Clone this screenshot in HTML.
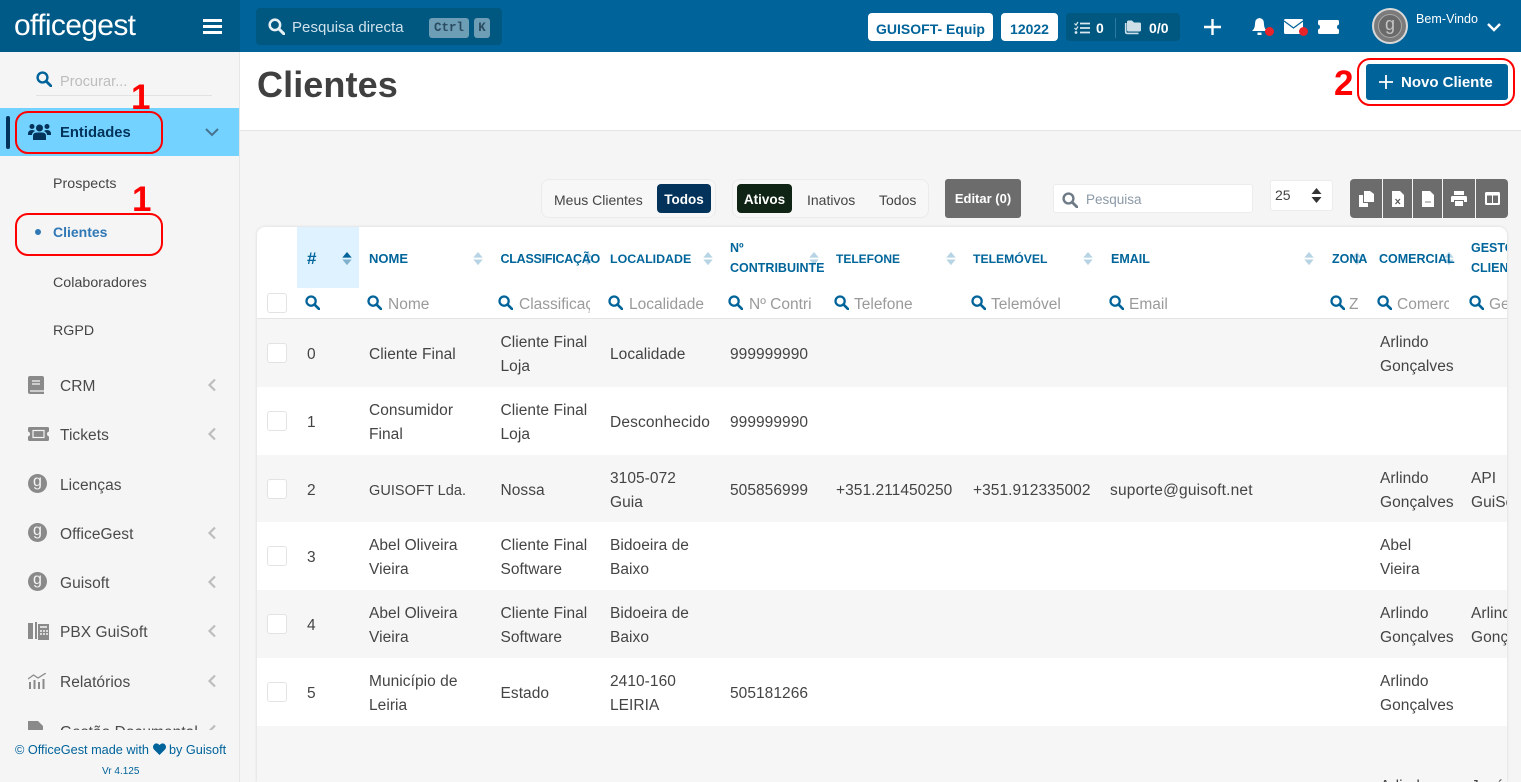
<!DOCTYPE html>
<html lang="pt"><head><meta charset="utf-8"><title>Clientes</title>
<style>
html,body{margin:0;padding:0;width:1521px;height:782px;overflow:hidden;background:#f5f5f5}
body{position:relative;font-family:"Liberation Sans",sans-serif;color:#444}
div,span,svg{position:absolute;box-sizing:border-box}
.t{white-space:nowrap;font-size:15.5px;letter-spacing:.05px;line-height:24px;height:24px;color:#444;margin-top:1px}
.m{font-size:15.5px;color:#4a4a4a;margin-top:2px}
.s{font-size:14.2px;color:#444}
.c .t{margin-top:2px}
.h{white-space:nowrap;font-weight:bold;font-size:12.5px;line-height:18px;color:#00659a;margin-top:1px}
.p{white-space:nowrap;font-size:15.5px;line-height:24px;color:#9a9a9a;overflow:hidden;height:24px;margin-top:2px}
.cb{width:20px;height:20px;left:10px;background:#fff;border:1px solid #e3e3e3;border-radius:3px}
.row{left:0;width:1250px;height:68px}
.g{background:#f6f6f6}
.gi{left:28px;width:19px;height:19px;border-radius:50%;background:#8a8a8a;color:#f5f5f5;font-size:16px;line-height:15px;text-align:center}
.w{background:#fff;border-radius:4px}
.dot{width:9px;height:9px;border-radius:50%;background:#e8242a;top:27px}
.red{border:2px solid #f00;border-radius:13px}
.n{font-weight:bold;color:#f00;white-space:nowrap}
</style></head><body>
<svg width="0" height="0" style="left:0;top:0"><defs>
<symbol id="q" viewBox="0 0 16 16"><circle cx="6.5" cy="6.5" r="4.9" fill="none" stroke="currentColor" stroke-width="2.4"/><path d="M10.2 10.2L15 15" stroke="currentColor" stroke-width="2.8" stroke-linecap="round"/></symbol>
<symbol id="ar" viewBox="0 0 12 16"><path d="M6 1L11 7H1Z" fill="#b7d4e4"/><path d="M6 15L11 9H1Z" fill="#b7d4e4"/></symbol>
<symbol id="cl" viewBox="0 0 10 14"><path d="M8 1.5L2.5 7L8 12.5" fill="none" stroke="#bdbdbd" stroke-width="2.2"/></symbol>
</defs></svg>

<!-- top bar -->
<div style="left:0;top:0;width:1521px;height:52px;background:#00639a"></div>
<div style="left:0;top:0;width:240px;height:52px;background:#005a88"></div>
<div class="t" style="left:14px;top:8px;height:34px;line-height:34px;font-size:30px;letter-spacing:-.65px;color:#fff">officegest</div>
<div style="left:203px;top:19px;width:19px;height:3px;background:#fff"></div>
<div style="left:203px;top:25px;width:19px;height:3px;background:#fff"></div>
<div style="left:203px;top:31px;width:19px;height:3px;background:#fff"></div>

<div style="left:256px;top:8px;width:246px;height:37px;background:#00577f;border-radius:4px"></div>
<svg style="left:268px;top:18px;color:#e6f0f5" width="17" height="17"><use href="#q"/></svg>
<div class="t" style="left:292px;top:15px;color:#cfe2ec;font-size:15px">Pesquisa directa</div>
<div style="left:429px;top:18px;width:40px;height:20px;background:#6e9db6;border-radius:3px;font:bold 12.5px/20px 'Liberation Mono',monospace;color:#2a4c60;text-align:center">Ctrl</div>
<div style="left:474px;top:18px;width:16px;height:20px;background:#6e9db6;border-radius:3px;font:bold 12.5px/20px 'Liberation Mono',monospace;color:#2a4c60;text-align:center">K</div>

<div class="w" style="left:868px;top:13px;width:125px;height:28px;color:#00639a;font-weight:bold;font-size:14px;line-height:32px;text-align:center;white-space:nowrap">GUISOFT- Equip</div>
<div class="w" style="left:1001px;top:13px;width:57px;height:28px;color:#00639a;font-weight:bold;font-size:14px;line-height:32px;text-align:center">12022</div>
<div style="left:1066px;top:13px;width:114px;height:28px;background:#00577f;border-radius:4px"></div>
<svg style="left:1074px;top:21px" width="16" height="14" viewBox="0 0 16 14"><path d="M6 2.5H16M6 7H16M6 11.5H16" stroke="#dbe8ef" stroke-width="1.8"/><path d="M.5 2.5L2 4L4 1M.5 7L2 8.5L4 5.5" fill="none" stroke="#dbe8ef" stroke-width="1.2"/><circle cx="2" cy="11.5" r="1.4" fill="#dbe8ef"/></svg>
<div class="t" style="left:1096px;top:15px;color:#fff;font-weight:bold;font-size:14px">0</div>
<div style="left:1115px;top:18px;width:1px;height:20px;background:#2a7aa5"></div>
<svg style="left:1124px;top:20px" width="17" height="15" viewBox="0 0 17 15"><path d="M3 2Q3 .5 4.500 .5H8L10 2.500H15.500Q17 2.500 17 4V10Q17 11.500 15.500 11.500H4.500Q3 11.500 3 10Z" fill="#cfdfe8"/><path d="M1.700 3V12Q1.700 13.400 3.200 13.400H14.500" fill="none" stroke="#cfdfe8" stroke-width="1.600"/></svg>
<div class="t" style="left:1149px;top:15px;color:#fff;font-weight:bold;font-size:14px">0/0</div>
<svg style="left:1204px;top:19px" width="17" height="16"><path d="M8.5 0V16M0 8H17" stroke="#fff" stroke-width="2.4"/></svg>
<svg style="left:1252px;top:17px" width="15" height="19" viewBox="0 0 15 19"><path d="M7.5 1Q12 1.500 12 7Q12 11.500 15 14H0Q3 11.500 3 7Q3 1.500 7.500 1Z" fill="#fff"/><path d="M5.500 15.500H9.500V18H5.500Z" fill="#fff"/></svg>
<div class="dot" style="left:1265px"></div>
<svg style="left:1284px;top:19px" width="19" height="15" viewBox="0 0 19 15"><rect width="19" height="15" rx="1.500" fill="#fff"/><path d="M0 2L9.500 9L19 2" fill="none" stroke="#00639a" stroke-width="1.300"/></svg>
<div class="dot" style="left:1299px"></div>
<svg style="left:1318px;top:20px" width="21" height="14" viewBox="0 0 21 14"><path d="M1.500 0H19.500Q21 0 21 1.500V4.500Q19 5 19 7Q19 9 21 9.500V12.500Q21 14 19.500 14H1.500Q0 14 0 12.500V9.500Q2 9 2 7Q2 5 0 4.500V1.500Q0 0 1.500 0Z" fill="#fff"/></svg>
<div style="left:1372px;top:8px;width:36px;height:36px;border-radius:50%;background:#7b7b7b;border:2px solid #d8d8d8"></div>
<div style="left:1378px;top:14px;width:24px;height:24px;border-radius:50%;background:#6a6a6a;border:1px solid #a8a8a8;color:#c4c4c4;font-size:18px;line-height:19px;text-align:center">g</div>
<div class="t" style="left:1416px;top:6px;color:#fff;font-size:12.5px">Bem-Vindo</div>
<svg style="left:1487px;top:23px" width="14" height="9"><path d="M1 1L7 7L13 1" fill="none" stroke="#fff" stroke-width="2.400"/></svg>

<!-- sidebar -->
<div style="left:0;top:52px;width:240px;height:730px;background:#f5f5f5;border-right:1px solid #e6e6e6"></div>
<svg style="left:36px;top:71px;color:#00639a" width="16" height="16"><use href="#q"/></svg>
<div class="t" style="left:60px;top:69px;color:#bdbdbd;font-size:14.5px">Procurar...</div>
<div style="left:36px;top:95px;width:176px;height:1px;background:#e2e2e2"></div>

<div style="left:0;top:108px;width:239px;height:48px;background:#73d2ff"></div>
<div style="left:6px;top:116px;width:4px;height:33px;background:#03335a;border-radius:2px"></div>
<svg style="left:28px;top:123px" width="23" height="18" viewBox="0 0 23 18" fill="#03335a"><circle cx="11.500" cy="5" r="3.500"/><circle cx="4" cy="3.500" r="2.500"/><circle cx="19" cy="3.500" r="2.500"/><path d="M5 17V13Q5 9.500 9 9.500H14Q18 9.500 18 13V17Z"/><path d="M0 11Q0 7 4 7Q6 7 7 8Q4 9.500 4 12H0Z"/><path d="M23 11Q23 7 19 7Q17 7 16 8Q19 9.500 19 12H23Z"/></svg>
<div class="t" style="left:60px;top:120px;color:#03335a;font-weight:bold;font-size:14.800px;letter-spacing:0">Entidades</div>
<svg style="left:205px;top:128px" width="14" height="9"><path d="M1 1L7 7L13 1" fill="none" stroke="#48728f" stroke-width="2"/></svg>

<div class="t s" style="left:53px;top:171px">Prospects</div>
<div style="left:35px;top:229px;width:6px;height:6px;border-radius:50%;background:#2f78b5"></div>
<div class="t s" style="left:53px;top:219px;color:#2f78b5;font-weight:bold;font-size:14px;letter-spacing:0">Clientes</div>
<div class="t s" style="left:53px;top:270px">Colaboradores</div>
<div class="t s" style="left:53px;top:318px">RGPD</div>

<svg style="left:28px;top:376px" width="16" height="18" viewBox="0 0 16 18"><path d="M2 0H14Q16 0 16 2V18H2Q0 18 0 16V2Q0 0 2 0Z" fill="#8a8a8a"/><path d="M4 5H12M4 8H12M2 15H16" stroke="#f5f5f5" stroke-width="1.300"/></svg>
<div class="t m" style="left:60px;top:373px">CRM</div>
<svg style="left:207px;top:378px" width="10" height="14"><use href="#cl"/></svg>
<svg style="left:28px;top:427px" width="21" height="14" viewBox="0 0 21 14"><path d="M1.500 0H19.500Q21 0 21 1.500V4.500Q19 5 19 7Q19 9 21 9.500V12.500Q21 14 19.500 14H1.500Q0 14 0 12.500V9.500Q2 9 2 7Q2 5 0 4.500V1.500Q0 0 1.500 0Z" fill="#8a8a8a"/><rect x="5" y="3.500" width="11" height="7" fill="none" stroke="#f5f5f5" stroke-width="1.200"/></svg>
<div class="t m" style="left:60px;top:422px">Tickets</div>
<svg style="left:207px;top:427px" width="10" height="14"><use href="#cl"/></svg>
<div class="gi" style="top:474px">g</div>
<div class="t m" style="left:60px;top:472px">Licenças</div>
<div class="gi" style="top:523px">g</div>
<div class="t m" style="left:60px;top:521px">OfficeGest</div>
<svg style="left:207px;top:526px" width="10" height="14"><use href="#cl"/></svg>
<div class="gi" style="top:572px">g</div>
<div class="t m" style="left:60px;top:570px">Guisoft</div>
<svg style="left:207px;top:575px" width="10" height="14"><use href="#cl"/></svg>
<svg style="left:28px;top:622px" width="21" height="18" viewBox="0 0 21 18"><path d="M0 1H5V17H0ZM7 0H9V17H7Z" fill="#8a8a8a"/><rect x="10" y="2" width="11" height="16" fill="#8a8a8a"/><path d="M12 5H19M12 9H14M15 9H17M18 9H20M12 12H14M15 12H17M18 12H20" stroke="#f5f5f5" stroke-width="1.400"/></svg>
<div class="t m" style="left:60px;top:619px">PBX GuiSoft</div>
<svg style="left:207px;top:624px" width="10" height="14"><use href="#cl"/></svg>
<svg style="left:28px;top:673px" width="18" height="16" viewBox="0 0 18 16"><path d="M1 9H3V16H1ZM5.500 7H7.500V16H5.500ZM10 9H12V16H10ZM14.500 6H16.500V16H14.500Z" fill="#8a8a8a"/><path d="M0 6L5.500 2L10 5L18 0" fill="none" stroke="#8a8a8a" stroke-width="1.300"/></svg>
<div class="t m" style="left:60px;top:669px">Relatórios</div>
<svg style="left:207px;top:674px" width="10" height="14"><use href="#cl"/></svg>
<div style="left:0;top:715px;width:239px;height:15px;overflow:hidden">
<svg style="left:28px;top:6px" width="15" height="18" viewBox="0 0 15 18"><path d="M0 0H10L15 5V18H0Z" fill="#8a8a8a"/></svg>
<div class="t m" style="left:60px;top:4px">Gestão Documental</div>
<svg style="left:207px;top:9px" width="10" height="14"><use href="#cl"/></svg>
</div>
<div class="t" style="left:15px;top:737px;font-size:12.7px;letter-spacing:0;color:#00639a">© OfficeGest made with</div>
<svg style="left:153px;top:743px" width="13" height="12" viewBox="0 0 13 12"><path d="M6.500 12L1 6.500Q-1 4 1 1.500Q3.500 -1 6.500 2Q9.500 -1 12 1.500Q14 4 12 6.500Z" fill="#00639a"/></svg>
<div class="t" style="left:169px;top:737px;font-size:12.7px;letter-spacing:0;color:#00639a">by Guisoft</div>
<div class="t" style="left:102px;top:759px;font-size:10px;letter-spacing:0;color:#00639a">Vr 4.125</div>

<div class="red" style="left:15px;top:111px;width:148px;height:43px"></div>
<div class="red" style="left:15px;top:213px;width:148px;height:43px"></div>
<div class="n" style="left:131px;top:80px;font-size:35px;line-height:36px">1</div>
<div class="n" style="left:132px;top:182px;font-size:35px;line-height:36px">1</div>

<!-- page header -->
<div style="left:240px;top:52px;width:1281px;height:79px;background:#fff;border-bottom:1px solid #e4e4e4"></div>
<div class="t" style="left:257px;top:63px;height:42px;line-height:42px;font-size:36px;font-weight:bold;letter-spacing:.1px;color:#404040">Clientes</div>
<div class="n" style="left:1334px;top:65px;font-size:35px;line-height:38px">2</div>
<div class="red" style="left:1357px;top:58px;width:158px;height:48px"></div>
<div style="left:1366px;top:64px;width:142px;height:36px;background:#00639a;border-radius:3px"></div>
<svg style="left:1379px;top:75px" width="14" height="14"><path d="M7 0V14M0 7H14" stroke="#fff" stroke-width="1.800"/></svg>
<div class="t" style="left:1401px;top:70px;color:#fff;font-weight:bold;font-size:15px;letter-spacing:0">Novo Cliente</div>

<!-- toolbar -->
<div style="left:541px;top:179px;width:175px;height:39px;background:#f7f7f7;border:1px solid #ebebeb;border-radius:8px"></div>
<div class="t" style="left:554px;top:187px;font-size:14px;letter-spacing:0;color:#444">Meus Clientes</div>
<div style="left:657px;top:184px;width:54px;height:29px;background:#03335a;border-radius:4px;color:#fff;font-weight:bold;font-size:13.500px;line-height:31px;text-align:center">Todos</div>
<div style="left:732px;top:179px;width:197px;height:39px;background:#f7f7f7;border:1px solid #ebebeb;border-radius:8px"></div>
<div style="left:737px;top:184px;width:55px;height:29px;background:#0f2414;border-radius:4px;color:#fff;font-weight:bold;font-size:13.500px;line-height:31px;text-align:center">Ativos</div>
<div class="t" style="left:807px;top:187px;font-size:14px;letter-spacing:0">Inativos</div>
<div class="t" style="left:879px;top:187px;font-size:14px;letter-spacing:0">Todos</div>
<div style="left:945px;top:179px;width:76px;height:39px;background:#6c6c6c;border-radius:3px;color:#fff;font-weight:bold;font-size:13px;line-height:40px;text-align:center;white-space:nowrap">Editar (0)</div>
<div style="left:1053px;top:184px;width:200px;height:29px;background:#fff;border:1px solid #ececec;border-radius:3px"></div>
<svg style="left:1062px;top:192px;color:#6e7b86" width="16" height="16"><use href="#q"/></svg>
<div class="t" style="left:1086px;top:187px;color:#8b99a6;font-size:13.500px;letter-spacing:0">Pesquisa</div>
<div style="left:1270px;top:180px;width:63px;height:31px;background:#fff;border:1px solid #ececec;border-radius:3px"></div>
<div class="t" style="left:1275px;top:182px;font-size:14px;letter-spacing:0">25</div>
<svg style="left:1311px;top:188px" width="11" height="15" viewBox="0 0 11 15"><path d="M5.500 0L10.500 6H.5ZM5.500 15L10.500 9H.5Z" fill="#333"/></svg>

<div style="left:1350px;top:179px;width:158px;height:39px;background:#6c6c6c;border-radius:4px"></div>
<div style="left:1382px;top:179px;width:1px;height:39px;background:#f5f5f5"></div>
<div style="left:1412px;top:179px;width:1px;height:39px;background:#f5f5f5"></div>
<div style="left:1442px;top:179px;width:1px;height:39px;background:#f5f5f5"></div>
<div style="left:1475px;top:179px;width:1px;height:39px;background:#f5f5f5"></div>
<svg style="left:1359px;top:191px" width="15" height="16" viewBox="0 0 15 16" fill="#fff"><path d="M5 0H11L15 3V11H5Z"/><path d="M0 4H4V12H9V16H0Z"/></svg>
<svg style="left:1392px;top:191px" width="12" height="16" viewBox="0 0 12 16"><path d="M0 0H8L12 4V16H0Z" fill="#fff"/><path d="M3.500 8L8 13M8 8L3.500 13" stroke="#555" stroke-width="1.200"/></svg>
<svg style="left:1422px;top:191px" width="12" height="16" viewBox="0 0 12 16"><path d="M0 0H8L12 4V16H0Z" fill="#fff"/><path d="M3 11H9" stroke="#aaa" stroke-width="1.500"/></svg>
<svg style="left:1451px;top:191px" width="16" height="15" viewBox="0 0 16 15" fill="#fff"><path d="M3 0H13V4H3ZM1.500 5H14.500Q16 5 16 6.500V11H13V9H3V11H0V6.500Q0 5 1.500 5ZM4 10H12V15H4Z"/></svg>
<svg style="left:1485px;top:192px" width="15" height="13" viewBox="0 0 15 13" fill="#fff"><path d="M1.500 0H13.500Q15 0 15 1.500V11.500Q15 13 13.500 13H1.500Q0 13 0 11.500V1.500Q0 0 1.500 0Z"/><path d="M2 3.500H7V11H2ZM8 3.500H13V11H8Z" fill="#6c6c6c"/></svg>

<!-- table card -->
<div class="c" style="left:257px;top:227px;width:1250px;height:555px;background:#fff;border-radius:8px 8px 0 0;box-shadow:0 0 3px rgba(0,0,0,.13);overflow:hidden">
<div style="left:40px;top:0;width:62px;height:61px;background:#dff2ff"></div>
<div class="row g" style="top:92px"></div>
<div class="row g" style="top:228px;height:67px"></div>
<div class="row g" style="top:363px"></div>
<div class="row g" style="top:499px;height:56px"></div>
<div style="left:0;top:91px;width:1250px;height:1px;background:#e4e4e4"></div>

<svg style="left:84px;top:24px" width="12" height="15" viewBox="0 0 12 16"><path d="M6 1L11 7H1Z" fill="#00639a"/><path d="M6 15L11 9H1Z" fill="#7fb0cc"/></svg>
<svg style="left:215px;top:24px" width="12" height="15"><use href="#ar"/></svg>
<svg style="left:325px;top:24px" width="12" height="15"><use href="#ar"/></svg>
<svg style="left:445px;top:24px" width="12" height="15"><use href="#ar"/></svg>
<svg style="left:551px;top:24px" width="12" height="15"><use href="#ar"/></svg>
<svg style="left:688px;top:24px" width="12" height="15"><use href="#ar"/></svg>
<svg style="left:825px;top:24px" width="12" height="15"><use href="#ar"/></svg>
<svg style="left:1046px;top:24px" width="12" height="15"><use href="#ar"/></svg>
<svg style="left:1094px;top:24px" width="12" height="15"><use href="#ar"/></svg>
<svg style="left:1186px;top:24px" width="12" height="15"><use href="#ar"/></svg>

<div class="h" style="left:50px;top:20px;font-size:17px;line-height:22px">#</div>
<div class="h" style="left:112px;top:22px;font-size:13px">NOME</div>
<div class="h" style="left:243.500px;top:22px;letter-spacing:-.25px">CLASSIFICAÇÃO</div>
<div class="h" style="left:353px;top:22px;font-size:12.4px">LOCALIDADE</div>
<div class="h" style="left:473px;top:10px;line-height:20px">Nº<br>CONTRIBUINTE</div>
<div class="h" style="left:579px;top:22px;font-size:12px">TELEFONE</div>
<div class="h" style="left:716px;top:22px;font-size:12.2px">TELEMÓVEL</div>
<div class="h" style="left:854px;top:22px">EMAIL</div>
<div class="h" style="left:1075px;top:22px">ZONA</div>
<div class="h" style="left:1122px;top:22px">COMERCIAL</div>
<div class="h" style="left:1214px;top:10px;line-height:20px">GESTOR<br>CLIENTE</div>

<div class="cb" style="top:66px"></div>
<svg style="left:48px;top:68px;color:#00639a" width="15" height="15"><use href="#q"/></svg>
<svg style="left:110px;top:68px;color:#00639a" width="15" height="15"><use href="#q"/></svg>
<svg style="left:241px;top:68px;color:#00639a" width="15" height="15"><use href="#q"/></svg>
<svg style="left:351px;top:68px;color:#00639a" width="15" height="15"><use href="#q"/></svg>
<svg style="left:471px;top:68px;color:#00639a" width="15" height="15"><use href="#q"/></svg>
<svg style="left:577px;top:68px;color:#00639a" width="15" height="15"><use href="#q"/></svg>
<svg style="left:714px;top:68px;color:#00639a" width="15" height="15"><use href="#q"/></svg>
<svg style="left:852px;top:68px;color:#00639a" width="15" height="15"><use href="#q"/></svg>
<svg style="left:1073px;top:68px;color:#00639a" width="15" height="15"><use href="#q"/></svg>
<svg style="left:1120px;top:68px;color:#00639a" width="15" height="15"><use href="#q"/></svg>
<svg style="left:1212px;top:68px;color:#00639a" width="15" height="15"><use href="#q"/></svg>
<div class="p" style="left:131px;top:64px">Nome</div>
<div class="p" style="left:262px;top:64px;width:71px">Classificaç</div>
<div class="p" style="left:372px;top:64px">Localidade</div>
<div class="p" style="left:492px;top:64px;width:67px">Nº Contri</div>
<div class="p" style="left:597px;top:64px">Telefone</div>
<div class="p" style="left:734px;top:64px">Telemóvel</div>
<div class="p" style="left:872px;top:64px">Email</div>
<div class="p" style="left:1092px;top:64px">Z</div>
<div class="p" style="left:1140px;top:64px;width:52px">Comerc</div>
<div class="p" style="left:1232px;top:64px">Ge</div>

<!-- rows -->
<div class="cb" style="top:116px"></div><div class="t" style="left:50px;top:114px">0</div>
<div class="t" style="left:112px;top:114px">Cliente Final</div>
<div class="t" style="left:243.500px;top:102px">Cliente Final</div><div class="t" style="left:243.500px;top:126px">Loja</div>
<div class="t" style="left:353px;top:114px">Localidade</div>
<div class="t" style="left:473px;top:114px">999999990</div>
<div class="t" style="left:1123px;top:102px">Arlindo</div><div class="t" style="left:1123px;top:126px">Gonçalves</div>

<div class="cb" style="top:184px"></div><div class="t" style="left:50px;top:182px">1</div>
<div class="t" style="left:112px;top:170px">Consumidor</div><div class="t" style="left:112px;top:194px">Final</div>
<div class="t" style="left:243.500px;top:170px">Cliente Final</div><div class="t" style="left:243.500px;top:194px">Loja</div>
<div class="t" style="left:353px;top:182px;letter-spacing:.15px">Desconhecido</div>
<div class="t" style="left:473px;top:182px">999999990</div>

<div class="cb" style="top:252px"></div><div class="t" style="left:50px;top:250px">2</div>
<div class="t" style="left:112px;top:250px;font-size:14.5px">GUISOFT Lda.</div>
<div class="t" style="left:243.500px;top:250px">Nossa</div>
<div class="t" style="left:353px;top:238px">3105-072</div><div class="t" style="left:353px;top:262px">Guia</div>
<div class="t" style="left:473px;top:250px">505856999</div>
<div class="t" style="left:579px;top:250px">+351.211450250</div>
<div class="t" style="left:716px;top:250px">+351.912335002</div>
<div class="t" style="left:853px;top:250px;letter-spacing:.2px">suporte@guisoft.net</div>
<div class="t" style="left:1123px;top:238px">Arlindo</div><div class="t" style="left:1123px;top:262px">Gonçalves</div>
<div class="t" style="left:1214px;top:238px">API</div><div class="t" style="left:1214px;top:262px">GuiSoft</div>

<div class="cb" style="top:319px"></div><div class="t" style="left:50px;top:317px">3</div>
<div class="t" style="left:112px;top:305px">Abel Oliveira</div><div class="t" style="left:112px;top:329px">Vieira</div>
<div class="t" style="left:243.500px;top:305px">Cliente Final</div><div class="t" style="left:243.500px;top:329px">Software</div>
<div class="t" style="left:353px;top:305px">Bidoeira de</div><div class="t" style="left:353px;top:329px">Baixo</div>
<div class="t" style="left:1123px;top:305px">Abel</div><div class="t" style="left:1123px;top:329px">Vieira</div>

<div class="cb" style="top:387px"></div><div class="t" style="left:50px;top:385px">4</div>
<div class="t" style="left:112px;top:373px">Abel Oliveira</div><div class="t" style="left:112px;top:397px">Vieira</div>
<div class="t" style="left:243.500px;top:373px">Cliente Final</div><div class="t" style="left:243.500px;top:397px">Software</div>
<div class="t" style="left:353px;top:373px">Bidoeira de</div><div class="t" style="left:353px;top:397px">Baixo</div>
<div class="t" style="left:1123px;top:373px">Arlindo</div><div class="t" style="left:1123px;top:397px">Gonçalves</div>
<div class="t" style="left:1214px;top:373px">Arlindo</div><div class="t" style="left:1214px;top:397px">Gonçalves</div>

<div class="cb" style="top:455px"></div><div class="t" style="left:50px;top:453px">5</div>
<div class="t" style="left:112px;top:441px">Município de</div><div class="t" style="left:112px;top:465px">Leiria</div>
<div class="t" style="left:243.500px;top:453px">Estado</div>
<div class="t" style="left:353px;top:441px">2410-160</div><div class="t" style="left:353px;top:465px">LEIRIA</div>
<div class="t" style="left:473px;top:453px">505181266</div>
<div class="t" style="left:1123px;top:441px">Arlindo</div><div class="t" style="left:1123px;top:465px">Gonçalves</div>

<div class="t" style="left:1123px;top:546px">Arlindo</div>
<div class="t" style="left:1214px;top:546px">José</div>
</div>
</body></html>
